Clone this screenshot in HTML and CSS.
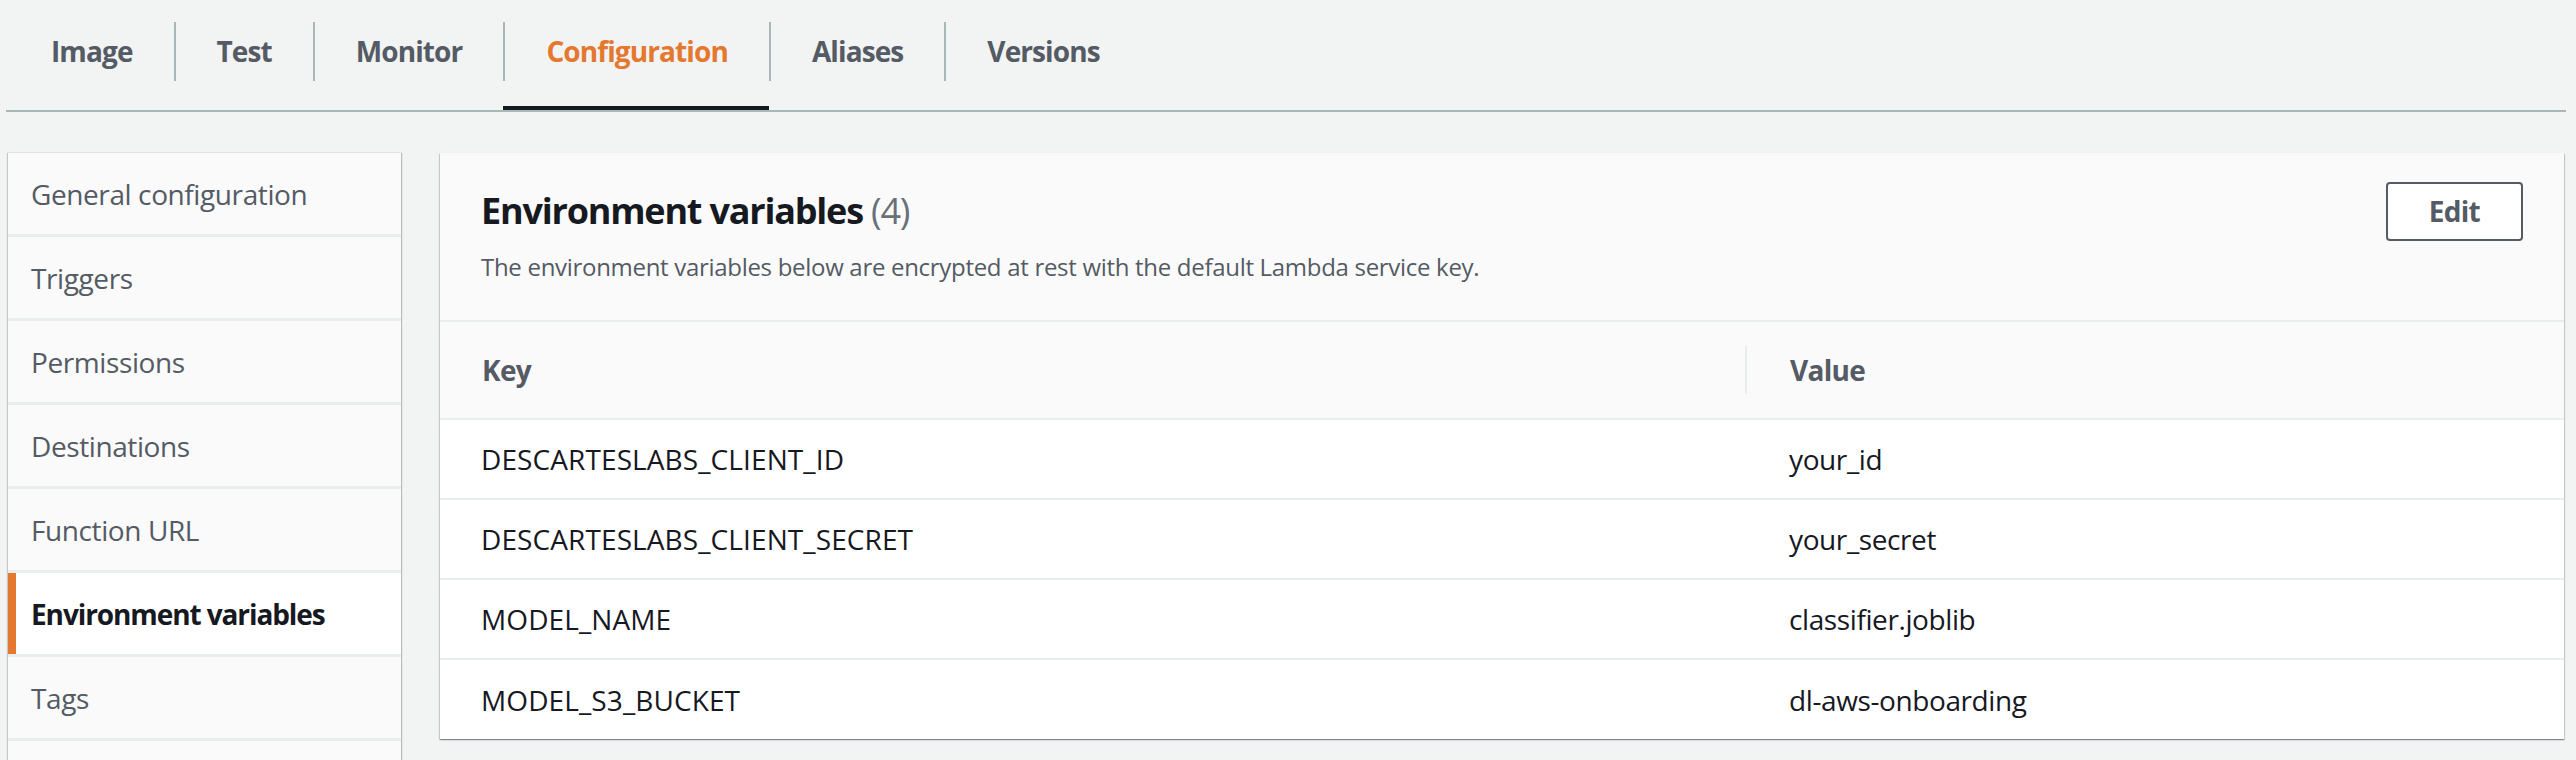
FILE: index.html
```html
<!DOCTYPE html>
<html lang="en">
<head>
<meta charset="utf-8">
<title>Environment variables</title>
<link rel="stylesheet" href="styles.css">
</head>
<body>
<nav class="tabs">
  <div class="tab"><span class="tab-label">Image</span></div>
  <div class="tab"><span class="tab-label">Test</span></div>
  <div class="tab"><span class="tab-label">Monitor</span></div>
  <div class="tab tab-active"><span class="tab-label">Configuration</span></div>
  <div class="tab"><span class="tab-label">Aliases</span></div>
  <div class="tab"><span class="tab-label">Versions</span></div>
</nav>
<div class="content">
  <aside class="side-nav">
    <div class="side-item">General configuration</div>
    <div class="side-item">Triggers</div>
    <div class="side-item">Permissions</div>
    <div class="side-item">Destinations</div>
    <div class="side-item">Function URL</div>
    <div class="side-item side-item-active">Environment variables</div>
    <div class="side-item">Tags</div>
    <div class="side-item side-item-more"></div>
  </aside>
  <section class="panel">
    <header class="panel-header">
      <div class="panel-title-block">
        <h2 class="panel-title">Environment variables <span class="panel-count">(4)</span></h2>
        <p class="panel-desc">The environment variables below are encrypted at rest with the default Lambda service key.</p>
      </div>
      <button class="btn">Edit</button>
    </header>
    <div class="table">
      <div class="th"><span class="th-label">Key</span></div>
      <div class="th"><span class="th-label th-divided">Value</span></div>
      <div class="td td-key">DESCARTESLABS_CLIENT_ID</div>
      <div class="td td-value">your_id</div>
      <div class="td td-key">DESCARTESLABS_CLIENT_SECRET</div>
      <div class="td td-value">your_secret</div>
      <div class="td td-key">MODEL_NAME</div>
      <div class="td td-value">classifier.joblib</div>
      <div class="td td-key td-last">MODEL_S3_BUCKET</div>
      <div class="td td-value td-last">dl-aws-onboarding</div>
    </div>
  </section>
</div>
</body>
</html>
```
FILE: styles.css
```css
* { box-sizing: border-box; }
html, body { margin: 0; padding: 0; }
body {
  background: #f2f3f3;
  font-family: "Open Sans", "Noto Sans", "Liberation Sans", sans-serif;
  color: #16191f;
  height: 760px;
  overflow: hidden;
}

/* Tabs */
.tabs {
  display: flex;
  margin: 0 10px 0 6px;
  padding-left: 3px;
  height: 112px;
  border-bottom: 2px solid #aab7b8;
}
.tab {
  display: flex;
  align-items: flex-start;
  height: 110px;
  border-bottom: 4px solid transparent;
}
.tab-active { border-bottom-color: #16191f; }
.tab-label {
  display: block;
  margin-top: 22px;
  height: 59px;
  line-height: 59px;
  padding: 0 41px 0 41px;
  font-size: 28px;
  font-weight: 700;
  letter-spacing: -0.9px;
  color: #545b64;
  border-left: 2px solid #aab7b8;
}
.tab:first-child .tab-label { border-left: none; padding-left: 42px; }
.tab-active .tab-label { color: #e4782f; }

/* Layout */
.content {
  display: flex;
  align-items: flex-start;
  gap: 39px;
  padding: 41px 12px 0 8px;
}

/* Side navigation */
.side-nav {
  flex: 0 0 393px;
  display: flex;
  flex-direction: column;
  gap: 3px;
  background: #eaeded;
  box-shadow: 1px 0 1px 0 rgba(0, 28, 36, 0.25), -1px 0 1px 0 rgba(0, 28, 36, 0.2);
}
.side-item {
  height: 81px;
  display: flex;
  align-items: center;
  padding-left: 23px;
  background: #fafafa;
  font-size: 28px;
  letter-spacing: -0.4px;
  color: #545b64;
}
.side-item-active {
  background: #ffffff;
  color: #16191f;
  font-weight: 700;
  border-left: 8px solid #e4782f;
  padding-left: 15px;
  letter-spacing: -1.1px;
}

/* Panel */
.panel {
  flex: 1;
  background: #ffffff;
  box-shadow: 0 1px 1px 0 rgba(0, 28, 36, 0.3), 1px 1px 1px 0 rgba(0, 28, 36, 0.15), -1px 1px 1px 0 rgba(0, 28, 36, 0.15);
}
.panel-header {
  display: flex;
  justify-content: space-between;
  align-items: flex-start;
  padding: 29px 41px 0 41px;
  height: 169px;
  background: #fafafa;
  border-bottom: 2px solid #eaeded;
}
.panel-title-block { padding-top: 7px; }
.panel-title {
  margin: 0;
  font-size: 36px;
  line-height: 44px;
  font-weight: 700;
  letter-spacing: -1.2px;
  color: #16191f;
}
.panel-count {
  font-weight: 400;
  color: #687078;
}
.panel-desc {
  margin: 18px 0 0 0;
  font-size: 24px;
  line-height: 32px;
  letter-spacing: -0.3px;
  color: #545b64;
}
.btn {
  height: 59px;
  padding: 0 41px;
  border: 2px solid #545b64;
  border-radius: 4px;
  background: #ffffff;
  font-family: inherit;
  font-size: 28px;
  font-weight: 700;
  letter-spacing: -0.7px;
  color: #545b64;
  line-height: 55px;
}

/* Table */
.table {
  display: grid;
  grid-template-columns: 1305px 1fr;
}
.th {
  height: 98px;
  display: flex;
  align-items: center;
  background: #fafafa;
  border-bottom: 2px solid #eaeded;
  font-size: 28px;
  font-weight: 700;
  letter-spacing: -0.7px;
  color: #545b64;
  padding-left: 42px;
}
.th + .th { padding-left: 0; }
.th-divided {
  display: flex;
  align-items: center;
  height: 48px;
  padding-left: 43px;
  border-left: 2px solid #eaeded;
}
.td {
  height: 80px;
  display: flex;
  align-items: center;
  border-bottom: 2px solid #eaeded;
  font-size: 28px;
  letter-spacing: -0.4px;
  color: #16191f;
  padding-left: 41px;
}
.td-key { letter-spacing: 0.1px; }
.td-value { padding-left: 44px; }
.td-last { border-bottom: none; height: 79px; }
```
